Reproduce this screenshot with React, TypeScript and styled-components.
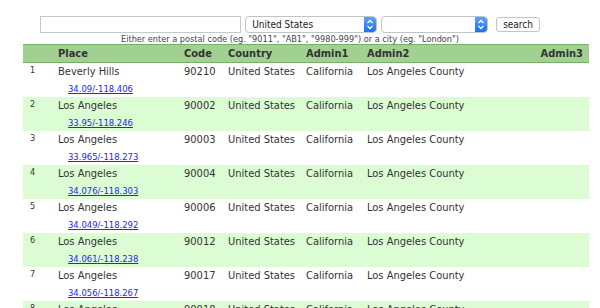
import styled, { createGlobalStyle } from 'styled-components';

type Place = {
  name: string;
  code: string;
  lat: string;
  lng: string;
};

const places: Place[] = [
  { name: 'Beverly Hills', code: '90210', lat: '34.09', lng: '-118.406' },
  { name: 'Los Angeles', code: '90002', lat: '33.95', lng: '-118.246' },
  { name: 'Los Angeles', code: '90003', lat: '33.965', lng: '-118.273' },
  { name: 'Los Angeles', code: '90004', lat: '34.076', lng: '-118.303' },
  { name: 'Los Angeles', code: '90006', lat: '34.049', lng: '-118.292' },
  { name: 'Los Angeles', code: '90012', lat: '34.061', lng: '-118.238' },
  { name: 'Los Angeles', code: '90017', lat: '34.056', lng: '-118.267' },
  { name: 'Los Angeles', code: '90018', lat: '34.029', lng: '-118.315' },
];

const GlobalStyle = createGlobalStyle`
  body {
    margin: 0;
    background: #fff;
    font-family: "DejaVu Sans Condensed", "DejaVu Sans", sans-serif;
    color: #333;
  }
`;

const Arrows = () => (
  <ArrowBox>
    <svg width='8' height='11' viewBox='0 0 8 11'>
      <path d='M1.5 4 L4 1.5 L6.5 4 M1.5 7 L4 9.5 L6.5 7' stroke='#fff' strokeWidth='1.3' fill='none' />
    </svg>
  </ArrowBox>
);

const App = () => {
  return (
    <>
      <GlobalStyle />
      <Page>
        <SearchForm>
          <FormRow>
            <TextInput />
            <FakeSelect $width={132}>
              <span>United States</span>
              <Arrows />
            </FakeSelect>
            <FakeSelect $width={108}>
              <span />
              <Arrows />
            </FakeSelect>
            <SearchButton>search</SearchButton>
          </FormRow>
          <Hint>
            Either enter a postal code (eg. "9011", "AB1", "9980-999") or a city (eg. "London")
          </Hint>
        </SearchForm>

        <ResultTable>
          <colgroup>
            <col style={{ width: 32 }} />
            <col style={{ width: 126 }} />
            <col style={{ width: 44 }} />
            <col style={{ width: 78 }} />
            <col style={{ width: 61 }} />
            <col style={{ width: 160 }} />
            <col />
          </colgroup>
          <thead>
            <tr>
              <HeadCell />
              <HeadCell>Place</HeadCell>
              <HeadCell>Code</HeadCell>
              <HeadCell>Country</HeadCell>
              <HeadCell>Admin1</HeadCell>
              <HeadCell>Admin2</HeadCell>
              <HeadCell $right>Admin3</HeadCell>
            </tr>
          </thead>
          <tbody>
            {places.map((p, i) => (
              <Row key={p.code} $odd={i % 2 === 1}>
                <IndexCell>{i + 1}</IndexCell>
                <Cell>
                  {p.name}
                  <CoordLink href='#'>
                    {p.lat}/{p.lng}
                  </CoordLink>
                </Cell>
                <Cell>{p.code}</Cell>
                <Cell>United States</Cell>
                <Cell>California</Cell>
                <Cell>Los Angeles County</Cell>
                <Cell />
              </Row>
            ))}
          </tbody>
        </ResultTable>
      </Page>
    </>
  );
};

const Page = styled.div`
  padding-top: 16px;
  width: 600px;
  height: 308px;
  overflow: hidden;
`;

const SearchForm = styled.div`
  margin-left: 40px;
  width: 500px;
`;

const FormRow = styled.div`
  display: flex;
  align-items: center;
  gap: 4px;
  height: 17px;
`;

const TextInput = styled.div`
  box-sizing: border-box;
  width: 202px;
  height: 17px;
  border: 1px solid #c8c8c8;
  background: #fff;
`;

const FakeSelect = styled.div<{ $width: number }>`
  box-sizing: border-box;
  width: ${(p) => p.$width}px;
  height: 17px;
  display: flex;
  align-items: stretch;
  justify-content: space-between;
  border: 1px solid #c4c4c4;
  border-radius: 4px;
  background: #fff;
  font-size: 10px;
  color: #222;
  overflow: hidden;

  > span {
    padding-left: 6px;
    line-height: 15px;
  }
`;

const ArrowBox = styled.div`
  width: 12px;
  display: flex;
  align-items: center;
  justify-content: center;
  background: linear-gradient(#5aa5ff, #1c6ff0);
  border-radius: 0 3px 3px 0;
`;

const SearchButton = styled.div`
  box-sizing: border-box;
  margin-left: 4px;
  height: 15px;
  padding: 0 6px;
  border: 1px solid #c4c4c4;
  border-radius: 3px;
  font-size: 10px;
  line-height: 13px;
  color: #222;
  background: #fff;
`;

const Hint = styled.div`
  margin-top: 1px;
  text-align: center;
  font-size: 9.1px;
  line-height: 10px;
  color: #444;
`;

const ResultTable = styled.table`
  margin: 0 0 0 23px;
  width: 566px;
  border-collapse: collapse;
  table-layout: fixed;
  font-size: 11px;
`;

const HeadCell = styled.th<{ $right?: boolean }>`
  height: 17px;
  padding: 0 3px;
  background: #a0d191;
  border-top: 1px solid #78b068;
  border-bottom: 1px solid #78b068;
  text-align: ${(p) => (p.$right ? 'right' : 'left')};
  padding-right: ${(p) => (p.$right ? '6px' : '3px')};
  font-weight: bold;
  color: #333;
`;

const Row = styled.tr<{ $odd: boolean }>`
  height: 34px;
  background: ${(p) => (p.$odd ? '#dcfcd4' : '#fff')};
`;

const Cell = styled.td`
  vertical-align: top;
  padding: 2px 3px 0;
  line-height: 14px;
  white-space: nowrap;
`;

const IndexCell = styled.td`
  vertical-align: top;
  padding: 1px 0 0 7px;
  font-size: 9px;
  line-height: 12px;
`;

const CoordLink = styled.a`
  display: block;
  margin: 4px 0 0 10px;
  font-size: 9.4px;
  line-height: 11px;
  color: #2424ff;
`;

export default App;
